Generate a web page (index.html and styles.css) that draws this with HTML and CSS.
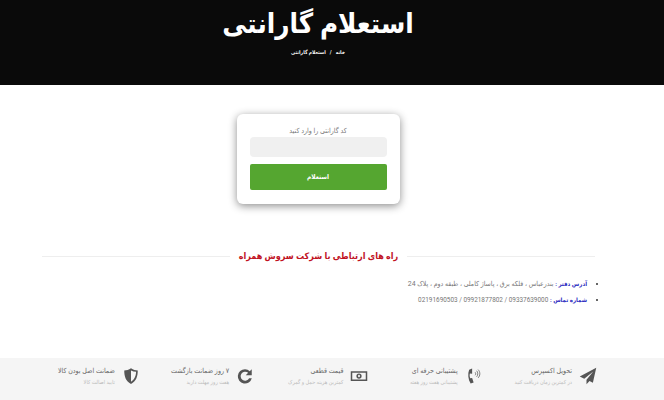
FILE: index.html
```html
<!DOCTYPE html>
<html lang="fa" dir="rtl">
<head>
<meta charset="utf-8">
<title>استعلام گارانتی</title>
<link rel="stylesheet" href="styles.css">
</head>
<body>
<header class="hero">
  <h1 class="hero-title">استعلام گارانتی</h1>
  <nav class="crumbs"><a>خانه</a><span class="sep">/</span><a>استعلام گارانتی</a></nav>
</header>
<main class="main">
  <form class="card">
    <label class="card-label">کد گارانتی را وارد کنید</label>
    <div class="field"></div>
    <button class="submit" type="button">استعلام</button>
  </form>
  <div class="divider"><h2 class="divider-title">راه های ارتباطی با شرکت سروش همراه</h2></div>
  <ul class="contacts">
    <li><b>آدرس دفتر :</b> بندرعباس ، فلکه برق ، پاساژ کاملی ، طبقه دوم ، پلاک 24</li>
    <li><b>شماره تماس :</b> <span class="phones" dir="ltr">02191690503 / 09921877802 / 09337639000</span></li>
  </ul>
</main>
<footer class="features">
  <div class="feature">
    <svg class="icon" viewBox="0 0 24 24"><path d="M23 1 1 12.500l6 3L19 6 10 17v6l4-4.500 4.500 2.500z"/></svg>
    <div><div class="f-title">تحویل اکسپرس</div><div class="f-sub">در کمترین زمان دریافت کنید</div></div>
  </div>
  <div class="feature">
    <svg class="icon" viewBox="0 0 24 24"><path d="M9.500 2 5.500 3.500C3.500 9 4 16 7.500 22l4-1.500-2-6-2.500.5C6 12.500 6 10.500 6.500 8.500l3 .5z"/><path class="wave" d="M13.500 7c1 1 1 3 0 4M15.500 5c2 2 2 6 0 8M17.500 3.500c3 3 3 8 0 11"/></svg>
    <div><div class="f-title">پشتیبانی حرفه ای</div><div class="f-sub">پشتیبانی هفت روز هفته</div></div>
  </div>
  <div class="feature">
    <svg class="icon" viewBox="0 0 24 24"><path fill-rule="evenodd" d="M1 5.500h22v13H1zM3 7.500v9h18v-9z"/><path fill-rule="evenodd" d="M12 8.500a3.500 3.500 0 1 1 0 7 3.500 3.500 0 0 1 0-7zm0 1.800a1.300 1.700 0 1 0 0 3.400 1.300 1.700 0 0 0 0-3.400z"/></svg>
    <div><div class="f-title">قیمت قطعی</div><div class="f-sub">کمترین هزینه حمل و گمرک</div></div>
  </div>
  <div class="feature">
    <svg class="icon" viewBox="0 0 24 24"><path d="M12 3c2.500 0 4.700 1 6.300 2.700L21 3v8h-8l3.200-3.200A6 6 0 1 0 17.500 15h3.600A9.500 9.500 0 1 1 12 3z"/></svg>
    <div><div class="f-title">۷ روز ضمانت بازگشت</div><div class="f-sub">هفت روز مهلت دارید</div></div>
  </div>
  <div class="feature">
    <svg class="icon" viewBox="0 0 24 24"><path d="M12 1.500c3 2 6 3 9 3 0 8-2 14-9 18-7-4-9-10-9-18 3 0 6-1 9-3z"/><path class="shield-cut" d="M12 4.500v15c5-3 6.500-8 6.800-13.200-2.500-.2-4.800-.8-6.800-1.800z"/></svg>
    <div><div class="f-title">ضمانت اصل بودن کالا</div><div class="f-sub">تایید اصالت کالا</div></div>
  </div>
</footer>
</body>
</html>
```
FILE: styles.css
```css
* { box-sizing: border-box; }
html, body { margin: 0; padding: 0; }
body {
  width: 664px;
  height: 400px;
  overflow: hidden;
  background: #fff;
  font-family: Roboto, "DejaVu Sans Condensed", "DejaVu Sans", sans-serif;
  display: flex;
  flex-direction: column;
}
.hero {
  height: 85px;
  background: #0a0a0a;
  color: #fff;
  text-align: center;
  padding: 3px 28px 0 0;
}
.hero-title {
  margin: 0;
  font-size: 27.500px;
  line-height: 42px;
  font-weight: 700;
}
.crumbs {
  font-size: 5px;
  font-weight: 700;
  line-height: 10px;
  margin-top: 2px;
}
.sep { margin: 0 4px; }
.main { flex: 1; padding: 29px 28px 0 0; }
.card {
  width: 163px;
  height: 90px;
  margin: 0 auto;
  background: #fff;
  border-radius: 6px;
  box-shadow: 0 2px 8px rgba(0,0,0,.45);
  padding: 12px 13px 0;
  display: flex;
  flex-direction: column;
}
.card-label {
  font-size: 7px;
  line-height: 11px;
  color: #777;
  text-align: center;
}
.field {
  height: 20px;
  background: #f0f0f0;
  border-radius: 4px;
}
.submit {
  height: 26px;
  margin-top: 7px;
  background: #55a630;
  color: #fff;
  border: 0;
  border-radius: 2px;
  font: 700 6.500px "DejaVu Sans Condensed", sans-serif;
}
.divider {
  margin: 42px 41px 0 42px;
  height: 20px;
  display: flex;
  align-items: center;
  justify-content: center;
  position: relative;
}
.divider::before {
  content: "";
  position: absolute;
  left: 0;
  right: 0;
  top: 50%;
  border-top: 1px solid #eee;
}
.divider-title {
  position: relative;
  margin: 0;
  padding: 0 9px;
  background: #fff;
  color: #c1121f;
  font-size: 9px;
  line-height: 20px;
  font-weight: 700;
}
.contacts {
  margin: 10px 0 0;
  padding: 0 49px 0 0;
  font-size: 6.900px;
  line-height: 15px;
  color: #777;
}
.contacts b { color: #2a2ac0; font-weight: 700; font-size: 6px; }
.contacts li::marker { color: #333; }
.phones { font-size: 6.400px; }
.features {
  height: 42px;
  background: #f5f5f5;
  padding: 0 67px 0 25.500px;
  display: grid;
  grid-template-columns: repeat(5, 1fr);
  align-items: start;
}
.feature {
  display: flex;
  gap: 7px;
  padding-top: 8px;
}
.icon { width: 18px; height: 18px; fill: #555; flex: none; margin-top: 1px; }
.wave { fill: none; stroke: #555; stroke-width: 1; }
.shield-cut { fill: #f5f5f5; }
.f-title { font-size: 7px; line-height: 11px; color: #666; white-space: nowrap; }
.f-sub { font-size: 5.500px; line-height: 10px; color: #bbb; white-space: nowrap; }
```
